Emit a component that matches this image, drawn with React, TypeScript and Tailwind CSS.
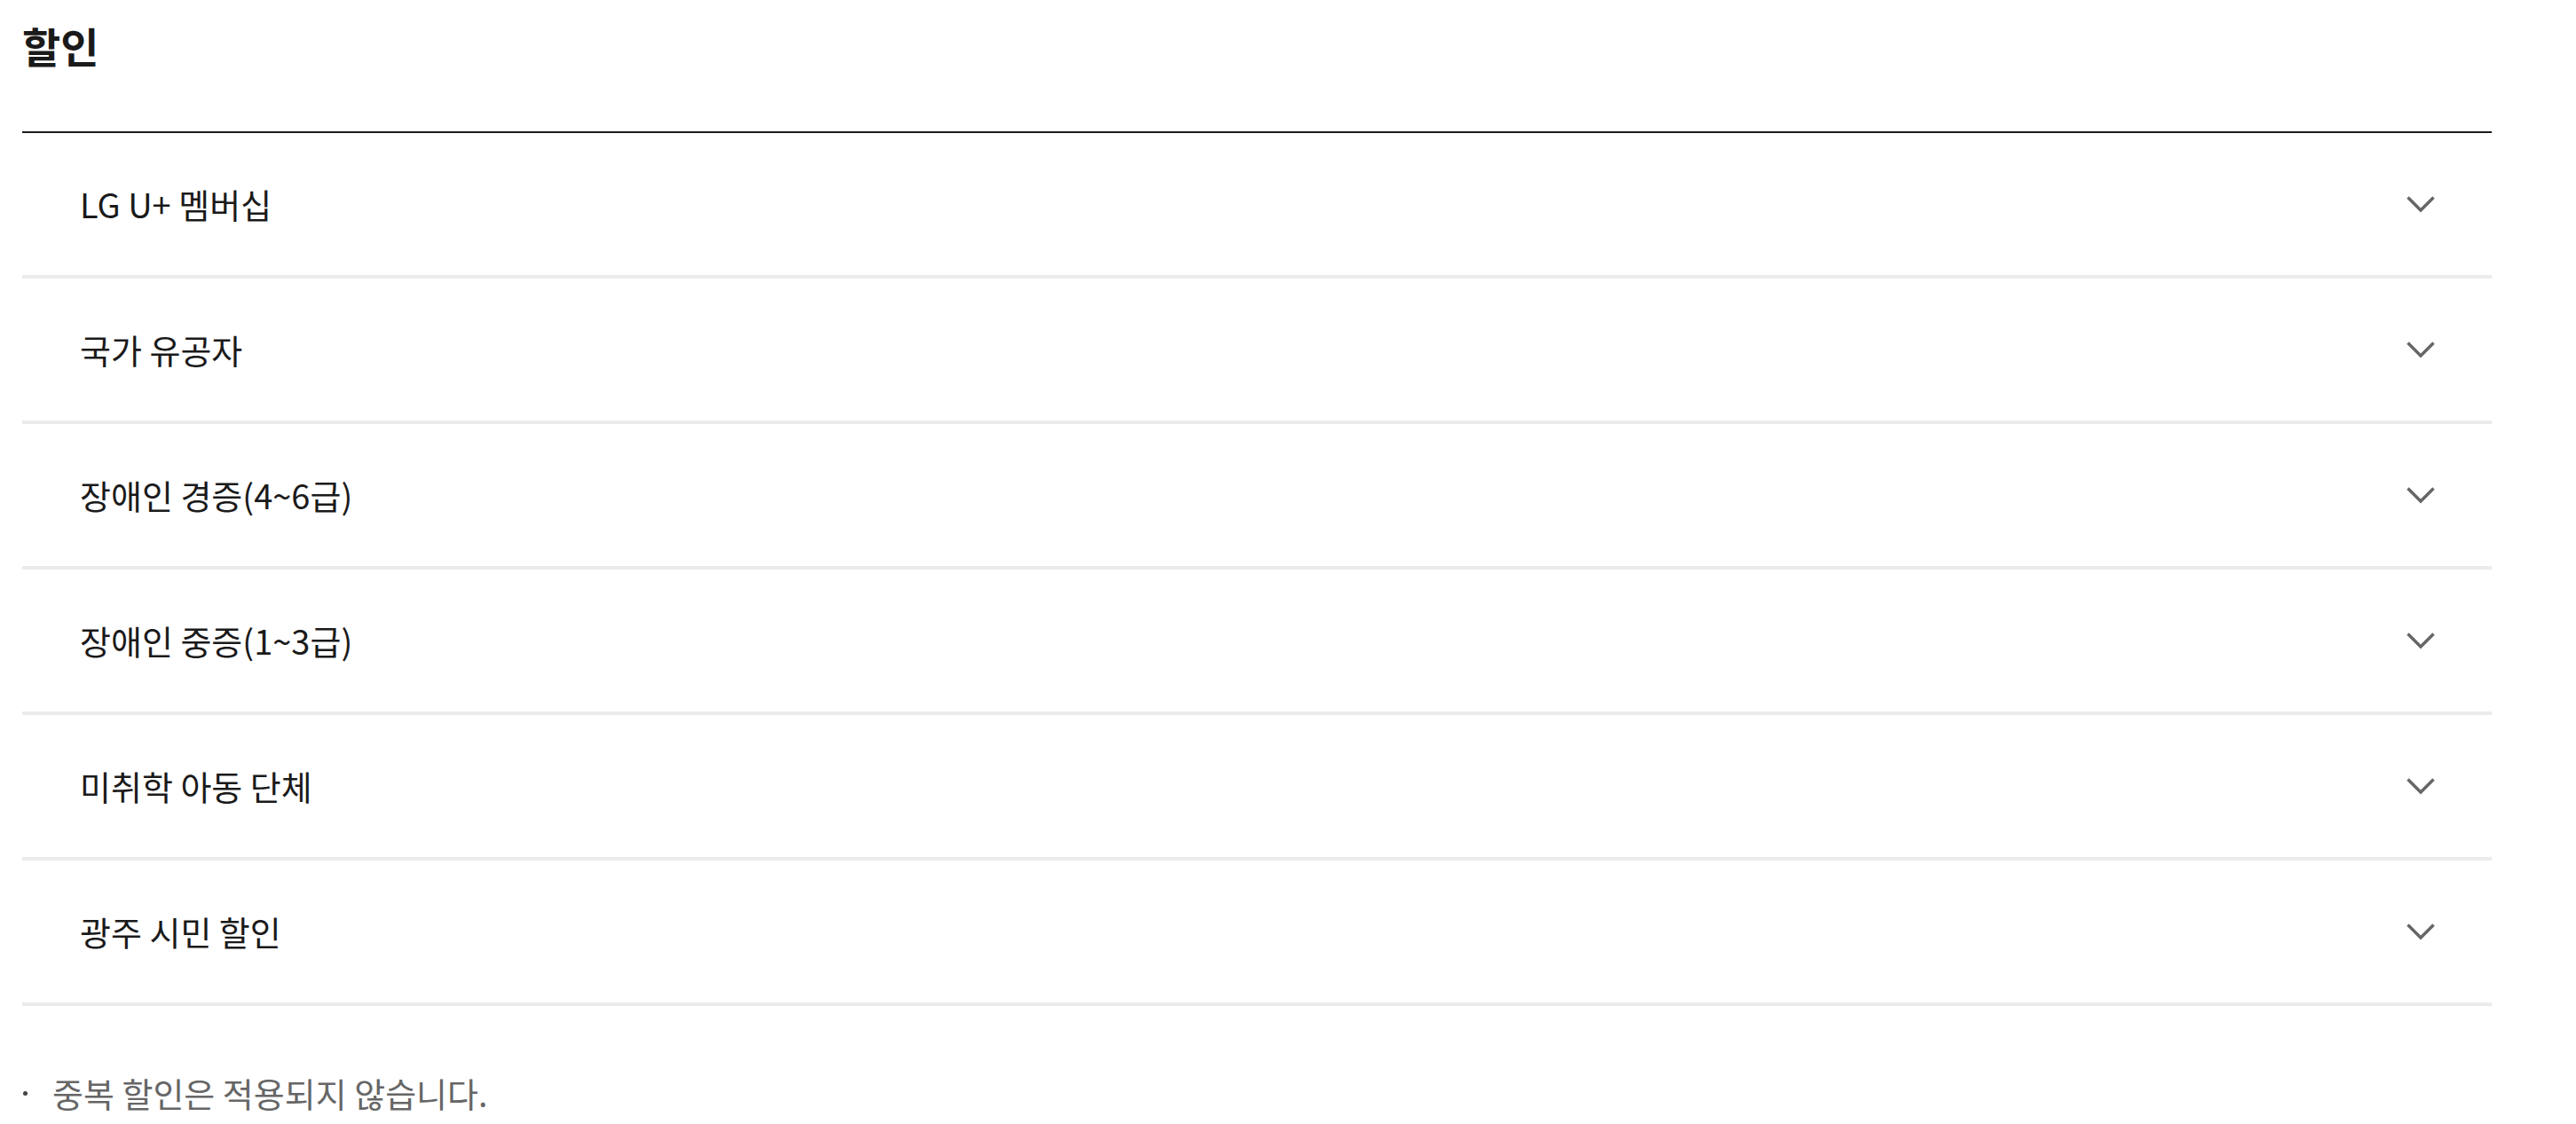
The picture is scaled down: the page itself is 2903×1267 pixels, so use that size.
import React from 'react';

const discounts = [
  'LG U+ 멤버십',
  '국가 유공자',
  '장애인 경증(4~6급)',
  '장애인 중증(1~3급)',
  '미취학 아동 단체',
  '광주 시민 할인',
];

function Chevron() {
  return (
    <svg width="32" height="19" viewBox="0 0 32 19" fill="none" className="shrink-0">
      <polyline points="1.5,1.5 16,16 30.5,1.5" stroke="#666666" strokeWidth="3.5" />
    </svg>
  );
}

export default function App() {
  return (
    <div className="min-h-screen bg-white">
      <div className="ml-[25px] w-[2783px] font-['Noto_Sans_CJK_KR','Noto_Sans',sans-serif]">
        {/* Title */}
        <h2 className="pt-[21px] pb-[67px] text-[47px] leading-[60px] font-bold text-[#1a1a1a] border-b-2 border-[#1a1a1a]">
          할인
        </h2>

        {/* Discount list */}
        <ul>
          {discounts.map((label) => (
            <li
              key={label}
              className="h-[164px] flex items-center justify-between pl-[65px] pr-[64px] border-b-4 border-[#ebebeb] cursor-pointer"
            >
              <span className="text-[38px] leading-[50px] text-[#1a1a1a]">{label}</span>
              <Chevron />
            </li>
          ))}
        </ul>

        {/* Note */}
        <div className="mt-[73px] flex items-center">
          <span className="ml-[1px] w-[5px] h-[5px] rounded-full bg-[#444444]" />
          <p className="ml-[28px] text-[38px] leading-[50px] text-[#666666]">중복 할인은 적용되지 않습니다.</p>
        </div>
      </div>
    </div>
  );
}
